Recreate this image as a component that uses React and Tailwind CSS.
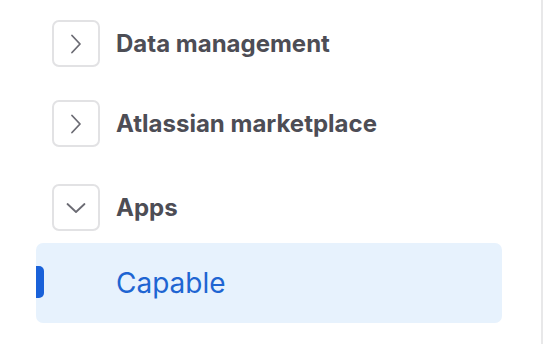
const items = [
  { label: 'Data management', open: false },
  { label: 'Atlassian marketplace', open: false },
  { label: 'Apps', open: true },
]

function Toggle({ open }) {
  return (
    <div className="flex h-[47px] w-[48px] shrink-0 items-center justify-center rounded-[7px] border-2 border-[#e2e2e4] bg-white">
      {open ? (
        <svg width="20" height="12" viewBox="0 0 20 12" fill="none" stroke="#6b6b73" strokeWidth="1.8" strokeLinecap="round" strokeLinejoin="round">
          <polyline points="1.5,2 10,10 18.5,2" />
        </svg>
      ) : (
        <svg width="12" height="20" viewBox="0 0 12 20" fill="none" stroke="#6b6b73" strokeWidth="1.8" strokeLinecap="round" strokeLinejoin="round">
          <polyline points="2,1.5 10,10 2,18.5" />
        </svg>
      )}
    </div>
  )
}

export default function App() {
  return (
    <div className="flex h-[344px] w-[546px] bg-white" style={{ fontFamily: 'Inter, "Noto Sans", sans-serif' }}>
      <div className="flex w-[541px] flex-col pl-[36px] pr-[39px] pt-[20px]">
        {items.map((it, i) => (
          <div key={it.label} className={`flex items-center gap-[16px] pl-[16px] ${i === 2 ? 'mt-[37px]' : i === 1 ? 'mt-[33px]' : ''}`}>
            <Toggle open={it.open} />
            <span className="text-[24px] font-bold leading-none text-[#4d4d55]">{it.label}</span>
          </div>
        ))}
        <div className="relative mt-[12px] flex h-[80px] items-center rounded-[7px] bg-[#e7f2fd] pl-[80px]">
          <span className="absolute left-0 top-[23px] h-[32px] w-[8px] rounded-r-[5px] bg-[#1961d9]" />
          <span className="text-[28px] leading-none text-[#1e65d2]">Capable</span>
        </div>
      </div>
      <div className="h-full w-[2px] bg-[#e8e8e9]" />
    </div>
  )
}
